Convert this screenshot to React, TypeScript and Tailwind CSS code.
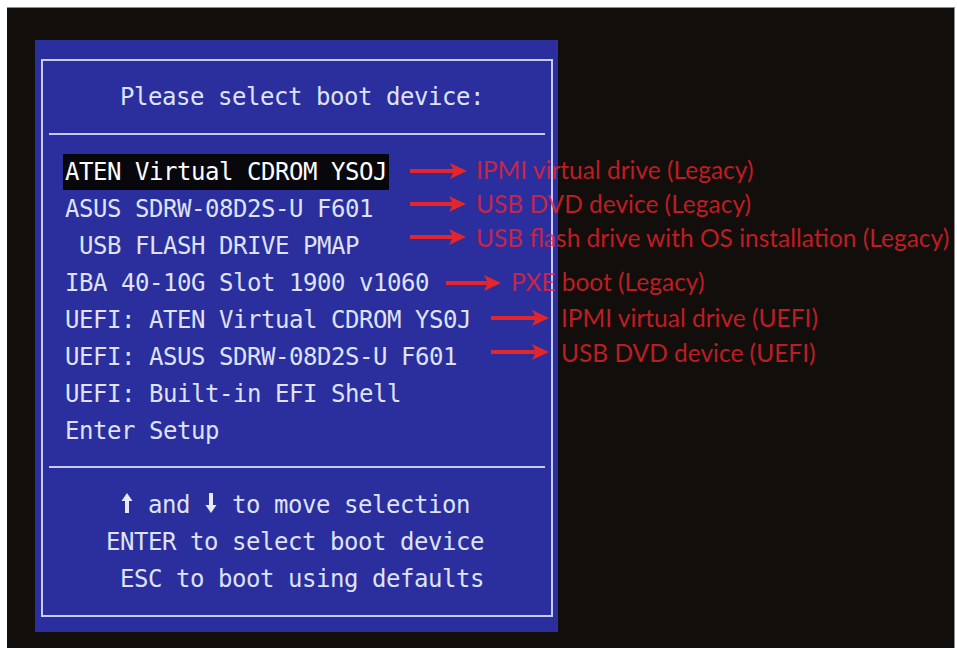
import React from "react";

const listRows: { text: string; selected?: boolean }[] = [
  { text: "ATEN Virtual CDROM YSOJ", selected: true },
  { text: "ASUS SDRW-08D2S-U F601" },
  { text: " USB FLASH DRIVE PMAP" },
  { text: "IBA 40-10G Slot 1900 v1060" },
  { text: "UEFI: ATEN Virtual CDROM YS0J" },
  { text: "UEFI: ASUS SDRW-08D2S-U F601" },
  { text: "UEFI: Built-in EFI Shell" },
  { text: "Enter Setup" },
];

const notes: { ax: number; aw: number; ay: number; tx: number; ty: number; text: string }[] = [
  { ax: 410, aw: 57, ay: 171, tx: 476, ty: 171, text: "IPMI virtual drive (Legacy)" },
  { ax: 410, aw: 56, ay: 204, tx: 476, ty: 205, text: "USB DVD device (Legacy)" },
  { ax: 410, aw: 56, ay: 237, tx: 476, ty: 239, text: "USB flash drive with OS installation (Legacy)" },
  { ax: 446, aw: 55, ay: 283, tx: 511, ty: 283, text: "PXE boot (Legacy)" },
  { ax: 491, aw: 58, ay: 318, tx: 561, ty: 319, text: "IPMI virtual drive (UEFI)" },
  { ax: 491, aw: 58, ay: 352, tx: 561, ty: 354, text: "USB DVD device (UEFI)" },
];

function Arrow({ x, y, w }: { x: number; y: number; w: number }) {
  return (
    <svg
      className="absolute"
      style={{ left: x, top: y - 9 }}
      width={w}
      height={18}
      viewBox={`0 0 ${w} 18`}
    >
      <rect x={0} y={7} width={w - 12} height={4} fill="#e3262b" />
      <polygon points={`${w - 17},1 ${w},9 ${w - 17},17 ${w - 13},9`} fill="#e3262b" />
    </svg>
  );
}

function KeyArrow({ down }: { down?: boolean }) {
  return (
    <svg width={14} height={20} viewBox="0 0 14 20" className={`mb-[3px] ${down ? "rotate-180" : ""}`}>
      <rect x={5} y={6} width={4} height={14} fill="#e8eafa" />
      <polygon points="1.5,8 7,0 12.5,8" fill="#e8eafa" />
    </svg>
  );
}

export default function App() {
  return (
    <div className="relative w-[957px] h-[651px] bg-white pt-[7px] pl-[7px] pr-[2px] pb-[3px] overflow-hidden">
      <div className="w-full h-full bg-[#110e0c] border-t border-r border-[#8d8d8d] pl-[28px] pt-[32px]">
        <div className="w-[523px] h-[592px] bg-[#2b2f9d] pl-[6px] pt-[19px] pr-[5px] pb-[15px]">
          <div className="h-full border-2 border-[#c8cbf5] flex flex-col text-[#dfe2f8] font-['DejaVu_Sans_Mono','Liberation_Mono',monospace] text-[24px] tracking-[-0.45px] leading-none whitespace-pre">
            <div className="h-[72px] flex items-center pl-[63px]"> Please select boot device:</div>
            <div className="mx-[6px] h-[2px] bg-[#c8cbf5]" />
            <div className="pt-[18px] pl-[20px] flex flex-col">
              {listRows.map((r) => (
                <div key={r.text} className="h-[37px] flex items-center">
                  {r.selected ? (
                    <span className="h-[36px] flex items-center px-[2px] bg-[#07070c] text-white">{r.text}</span>
                  ) : (
                    <span className="px-[2px]">{r.text}</span>
                  )}
                </div>
              ))}
            </div>
            <div className="mt-[17px] mx-[6px] h-[2px] bg-[#c8cbf5]" />
            <div className="pt-[18px] pl-[63px] flex flex-col">
              <div className="h-[37px] flex items-center">
                <span>{" "}</span>
                <KeyArrow />
                <span>{" and "}</span>
                <KeyArrow down />
                <span>{" to move selection"}</span>
              </div>
              <div className="h-[37px] flex items-center">ENTER to select boot device</div>
              <div className="h-[37px] flex items-center"> ESC to boot using defaults</div>
            </div>
          </div>
        </div>
      </div>

      {notes.map((n) => (
        <React.Fragment key={n.text}>
          <Arrow x={n.ax} y={n.ay} w={n.aw} />
          <div
            className="absolute whitespace-nowrap font-['Lato','Open_Sans',sans-serif] text-[24.5px] leading-[28px] text-[#f7232b]/75"
            style={{ left: n.tx, top: n.ty - 15 }}
          >
            {n.text}
          </div>
        </React.Fragment>
      ))}
    </div>
  );
}
